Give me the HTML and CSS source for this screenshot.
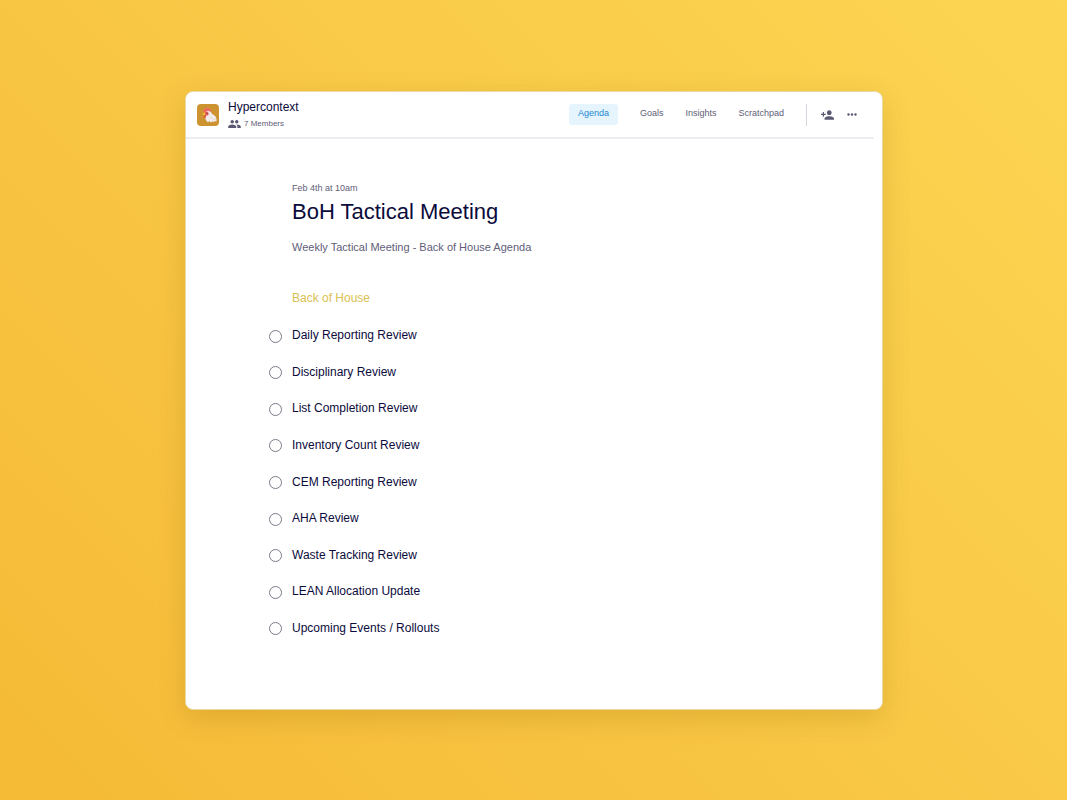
FILE: index.html
```
<!DOCTYPE html>
<html lang="en">
<head>
    <meta charset="UTF-8">
    <meta name="viewport" content="width=device-width, initial-scale=1.0">
    <title>BoH Tactical Meeting</title>
    <link rel="stylesheet" href="styles.css">
</head>
<body>

<div class="card">
    <header class="header">
        <svg class="logo" viewBox="0 0 22 22" aria-hidden="true">
            <rect width="22" height="22" rx="4" fill="#cc9330"/>
            <path d="M7.2 8.200C5.500 6.500 6.500 4.800 8.200 5.200 8.500 3.400 11.500 3.200 12.500 5.200 14 5.300 14.500 7 13.800 8.200L10 9.500z" fill="#ee6a62"/>
            <path d="M9 8C10.500 6.200 13.600 6.800 14.600 9.200 15.400 10.600 17.300 10.800 18.400 12.200 19.700 14 19.800 16 19.300 17.800L17.800 16.800 17 18.300 15.400 17.300 14 18.500 12.400 17.300 10.600 18.200 9 16.300C8 14.800 8.500 12.500 9 11z" fill="#f1eceb"/>
            <path d="M13 12.500C14 14.500 16 15.200 18.700 15.200" fill="none" stroke="#dcd4d3" stroke-width=".7"/>
            <path d="M8.400 8.300 4.800 10.100 8.200 11.200z" fill="#f8bd35"/>
            <ellipse cx="9.800" cy="9.800" rx="1.900" ry="2" fill="#ec6059"/>
            <ellipse cx="8" cy="12.600" rx=".9" ry="1.500" fill="#e3514b"/>
            <circle cx="10" cy="9.300" r=".6" fill="#3c2b35"/>
        </svg>
        <div class="team">
            <div class="team-name">Hypercontext</div>
            <div class="members">
                <svg class="members-icon" viewBox="1 5 22 14" aria-hidden="true">
                    <path d="M16 11c1.660 0 2.990-1.340 2.990-3S17.660 5 16 5s-3 1.340-3 3 1.340 3 3 3zm-8 0c1.660 0 2.990-1.340 2.990-3S9.660 5 8 5 5 6.340 5 8s1.340 3 3 3zm0 2c-2.330 0-7 1.170-7 3.500V19h14v-2.500c0-2.330-4.670-3.500-7-3.500zm8 0c-.290 0-.620.020-.970.050 1.160.840 1.970 1.970 1.970 3.450V19h6v-2.500c0-2.330-4.670-3.500-7-3.500z"/>
                </svg>
                <span>7 Members</span>
            </div>
        </div>
        <nav class="nav">
            <a class="nav-link active" href="#">Agenda</a>
            <a class="nav-link" href="#">Goals</a>
            <a class="nav-link" href="#">Insights</a>
            <a class="nav-link" href="#">Scratchpad</a>
        </nav>
        <div class="actions">
            <button class="icon-button" type="button" aria-label="Add member">
                <svg class="add-icon" viewBox="1 4 22 16" aria-hidden="true">
                    <path d="M15 12c2.210 0 4-1.790 4-4s-1.790-4-4-4-4 1.790-4 4 1.790 4 4 4zm-9-2V7H4v3H1v2h3v3h2v-3h3v-2H6zm9 4c-2.670 0-8 1.340-8 4v2h16v-2c0-2.660-5.330-4-8-4z"/>
                </svg>
            </button>
            <button class="icon-button" type="button" aria-label="More">
                <svg class="more-icon" viewBox="0 0 10 3" aria-hidden="true">
                    <circle cx="1.500" cy="1.500" r="1.200"/>
                    <circle cx="5" cy="1.500" r="1.200"/>
                    <circle cx="8.500" cy="1.500" r="1.200"/>
                </svg>
            </button>
        </div>
    </header>

    <main class="agenda">
        <div class="date">Feb 4th at 10am</div>
        <h1 class="title">BoH Tactical Meeting</h1>
        <p class="subtitle">Weekly Tactical Meeting - Back of House Agenda</p>
        <h2 class="section-title">Back of House</h2>
        <div class="items">
            <label class="item"><input class="check" type="checkbox"><span>Daily Reporting Review</span></label>
            <label class="item"><input class="check" type="checkbox"><span>Disciplinary Review</span></label>
            <label class="item"><input class="check" type="checkbox"><span>List Completion Review</span></label>
            <label class="item"><input class="check" type="checkbox"><span>Inventory Count Review</span></label>
            <label class="item"><input class="check" type="checkbox"><span>CEM Reporting Review</span></label>
            <label class="item"><input class="check" type="checkbox"><span>AHA Review</span></label>
            <label class="item"><input class="check" type="checkbox"><span>Waste Tracking Review</span></label>
            <label class="item"><input class="check" type="checkbox"><span>LEAN Allocation Update</span></label>
            <label class="item"><input class="check" type="checkbox"><span>Upcoming Events / Rollouts</span></label>
        </div>
    </main>
</div>

</body>
</html>
```
FILE: styles.css
```
* {
    box-sizing: border-box;
}
body {
    margin: 0;
    min-height: 100vh;
    padding: 91px 184px 90px 185px;
    display: flex;
    font-family: "Liberation Sans", Arial, sans-serif;
    color: #0b0b3b;
    background: linear-gradient(45deg, #f5ba36, #fcd553);
}
.card {
    flex: 1;
    display: flex;
    flex-direction: column;
    background: #fff;
    border: 1px solid #ead9a6;
    border-radius: 8px;
    box-shadow: 0 8px 28px rgba(130, 90, 0, 0.2);
}
.header {
    display: flex;
    align-items: center;
    height: 47px;
    margin-right: 8px;
    padding: 0 17px 0 11px;
    border-bottom: 2px solid #ececf0;
}
.logo {
    width: 22px;
    height: 22px;
    margin-top: 1px;
}
.team {
    margin-left: 9px;
}
.team-name {
    font-size: 12px;
    line-height: 16px;
}
.members {
    display: flex;
    align-items: center;
    gap: 3px;
    margin-top: 2px;
    font-size: 8px;
    line-height: 14px;
    color: #5f5d78;
}
.members-icon {
    width: 13px;
    height: 8px;
    fill: #5a5873;
}
.nav {
    display: flex;
    gap: 4px;
    margin-left: auto;
}
.nav-link {
    padding: 0 9px 3px;
    border-radius: 3px;
    font-size: 9px;
    line-height: 18px;
    color: #5f5d78;
    text-decoration: none;
}
.nav-link.active {
    margin-right: 9px;
    color: #1e88d2;
    background: #e6f4fd;
}
.actions {
    display: flex;
    align-items: center;
    gap: 13px;
    height: 22px;
    margin-left: 13px;
    padding-left: 14px;
    border-left: 1px solid #d6d6de;
}
.icon-button {
    display: flex;
    padding: 0;
    border: none;
    background: none;
    cursor: pointer;
    fill: #5a5873;
}
.add-icon {
    width: 13px;
    height: 10px;
}
.more-icon {
    width: 10px;
    height: 3px;
}
.agenda {
    flex: 1;
    display: flex;
    flex-direction: column;
    padding: 42px 32px 63px 106px;
}
.date {
    font-size: 9px;
    line-height: 14px;
    color: #5f5d78;
}
.title {
    margin: 4px 0 0;
    font-size: 22px;
    font-weight: normal;
    line-height: 26px;
}
.subtitle {
    margin: 14px 0 0;
    font-size: 11px;
    line-height: 16px;
    color: #5f5d78;
}
.section-title {
    margin: 34px 0 10px;
    font-size: 12px;
    font-weight: normal;
    line-height: 18px;
    color: #d9c152;
}
.items {
    flex: 1;
    display: flex;
    flex-direction: column;
    margin-left: -23px;
}
.item {
    flex: 1;
    display: flex;
    align-items: center;
    gap: 10px;
    font-size: 12px;
    line-height: 18px;
    cursor: pointer;
}
.check {
    appearance: none;
    width: 13px;
    height: 13px;
    margin: 2px 0 0;
    border: 1px solid #7b7a88;
    border-radius: 50%;
    background: #fff;
}
.check:checked {
    background: #7b7a88;
}
```
